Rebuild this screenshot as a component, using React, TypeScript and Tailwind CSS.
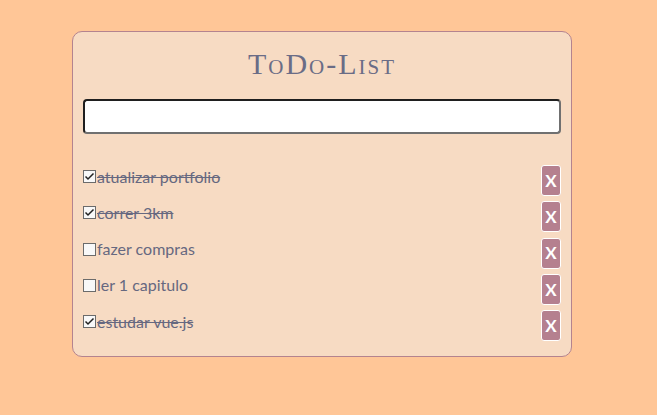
import React from "react";

const items = [
  { text: "atualizar portfolio", done: true },
  { text: "correr 3km", done: true },
  { text: "fazer compras", done: false },
  { text: "ler 1 capitulo", done: false },
  { text: "estudar vue.js", done: true },
];

function Box({ checked }: { checked: boolean }) {
  return (
    <span className="inline-flex h-[13px] w-[13px] shrink-0 items-center justify-center border border-[#6b6b6b] bg-[#f8f8f8] mr-px">
      {checked && (
        <svg width="11" height="11" viewBox="0 0 11 11">
          <path d="M1.5 5.5 L4 8 L9.5 2.5" fill="none" stroke="#222" strokeWidth="1.5" />
        </svg>
      )}
    </span>
  );
}

export default function App() {
  return (
    <div className="min-h-[415px] w-full bg-[#ffc697] pt-[31px] pl-[72px]">
      <div className="w-[500px] rounded-[10px] border border-[#b4838f] bg-[#f7dbc3] px-[10px] pt-[12px] pb-[15px]">
        <h1
          className="text-center text-[30px] leading-[40px] text-[#6a6c86] tracking-[2px]"
          style={{ fontFamily: '"Liberation Serif", serif', fontVariant: "small-caps" }}
        >
          ToDo-List
        </h1>
        <input
          className="mt-[15px] block h-[35px] w-[478px] rounded-[4px] border-2 border-t-[#1f1f1f] border-l-[#1f1f1f] border-b-[#707070] border-r-[#707070] bg-white outline-none"
          type="text"
        />
        <ul className="mt-[31px] flex flex-col gap-[5.3px]" style={{ fontFamily: "Lato, sans-serif" }}>
          {items.map((it) => (
            <li key={it.text} className="flex h-[31px] items-center justify-between">
              <label className="-mt-[8px] flex items-center text-[16px] text-[#666880]">
                <Box checked={it.done} />
                <span className={it.done ? "line-through" : ""}>{it.text}</span>
              </label>
              <button className="flex h-[31px] w-[20px] items-center justify-center rounded-[3px] border border-white bg-[#b5808f] text-[17px] font-bold text-white" style={{ fontFamily: "Lato, sans-serif" }}>
                X
              </button>
            </li>
          ))}
        </ul>
      </div>
    </div>
  );
}
